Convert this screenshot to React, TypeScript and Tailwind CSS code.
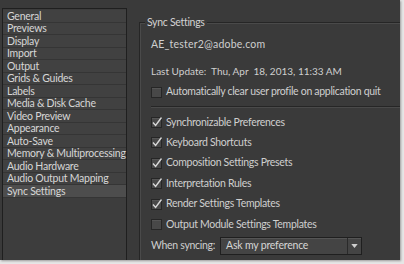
const sections = [
  "General",
  "Previews",
  "Display",
  "Import",
  "Output",
  "Grids & Guides",
  "Labels",
  "Media & Disk Cache",
  "Video Preview",
  "Appearance",
  "Auto-Save",
  "Memory & Multiprocessing",
  "Audio Hardware",
  "Audio Output Mapping",
  "Sync Settings",
];

const syncItems: [string, boolean][] = [
  ["Synchronizable Preferences", true],
  ["Keyboard Shortcuts", true],
  ["Composition Settings Presets", true],
  ["Interpretation Rules", true],
  ["Render Settings Templates", true],
  ["Output Module Settings Templates", false],
];

function Check({ on }: { on: boolean }) {
  return (
    <span className="relative w-[11px] h-[11px] shrink-0 border border-[#262626] bg-[#484848] shadow-[inset_0_1px_0_#555]">
      {on && (
        <svg viewBox="0 0 12 12" className="absolute -left-[1px] -top-[2px] w-[12px] h-[12px]">
          <path d="M2 6.5 L4.6 9.5 L10.5 1.5" fill="none" stroke="#d8d8d8" strokeWidth="1.4" />
        </svg>
      )}
    </span>
  );
}

function CheckRow({ label, on }: { label: string; on: boolean }) {
  return (
    <div className="flex items-center gap-[4px] h-[20.4px]">
      <Check on={on} />
      <span className="whitespace-nowrap text-[10.5px] tracking-[-0.3px] text-[#cfcfcf]">{label}</span>
    </div>
  );
}

export default function App() {
  return (
    <div
      className="w-[404px] h-[264px] overflow-hidden bg-[#e6e6e6]"
      style={{ fontFamily: "Lato, 'Liberation Sans', sans-serif" }}
    >
      <div className="w-[400px] h-[260px] bg-[#3a3a3a] flex shadow-[1px_1px_2px_#9a9a9a]">
        {/* category list */}
        <div className="ml-[2px] mt-[8px] w-[125px] h-[252px] shrink-0 border border-[#1f1f1f] border-b-0 bg-[#3d3d3d] pt-[1px]">
          {sections.map((s) => (
            <div
              key={s}
              className={
                "h-[12.5px] flex items-center pl-[4px] border-b border-[#353535] whitespace-nowrap text-[10.5px] tracking-[-0.25px] leading-none text-[#d6d6d6] " +
                (s === "Sync Settings" ? "bg-[#4d4d4d]" : "bg-[#414141]")
              }
            >
              {s}
            </div>
          ))}
        </div>

        {/* sync settings group */}
        <div className="relative ml-[12px] mt-[22px] flex-1 border-l border-t border-[#262626] shadow-[inset_1px_1px_0_#4a4a4a]">
          <span className="absolute left-[5px] -top-[8px] px-[2px] bg-[#3a3a3a] whitespace-nowrap text-[10.5px] tracking-[-0.3px] leading-[14px] text-[#d2d2d2]">
            Sync Settings
          </span>
          <div className="pl-[11px] pt-[14px] text-[#cfcfcf]">
            <div className="text-[10.5px] tracking-[0.2px] leading-[14px]">AE_tester2@adobe.com</div>
            <div className="mt-[13px] whitespace-nowrap text-[10px] leading-[14px]">Last Update:&nbsp; Thu, Apr&nbsp; 18, 2013, 11:33 AM</div>
            <div className="mt-[4px]">
              <CheckRow label="Automatically clear user profile on application quit" on={false} />
            </div>
            <div className="mt-[4px] mb-[4px] h-[2px] border-t border-[#262626] border-b border-b-[#4a4a4a]" />
            {syncItems.map(([l, on]) => (
              <CheckRow key={l} label={l} on={on} />
            ))}
            <div className="mt-[2px] flex items-center gap-[5px]">
              <span className="whitespace-nowrap text-[10.5px] tracking-[-0.3px] text-[#cfcfcf]">When syncing:</span>
              <div className="w-[142px] h-[18px] flex items-center border border-[#1f1f1f] bg-[#444] shadow-[inset_0_1px_0_#555]">
                <span className="flex-1 pl-[5px] whitespace-nowrap text-[10.5px] tracking-[-0.2px] text-[#d6d6d6]">Ask my preference</span>
                <span className="w-[14px] h-full border-l border-[#2a2a2a] flex items-center justify-center">
                  <svg viewBox="0 0 8 5" className="w-[7px] h-[4px]">
                    <path d="M0 0 H8 L4 5 Z" fill="#cfcfcf" />
                  </svg>
                </span>
              </div>
            </div>
          </div>
        </div>
      </div>
    </div>
  );
}
